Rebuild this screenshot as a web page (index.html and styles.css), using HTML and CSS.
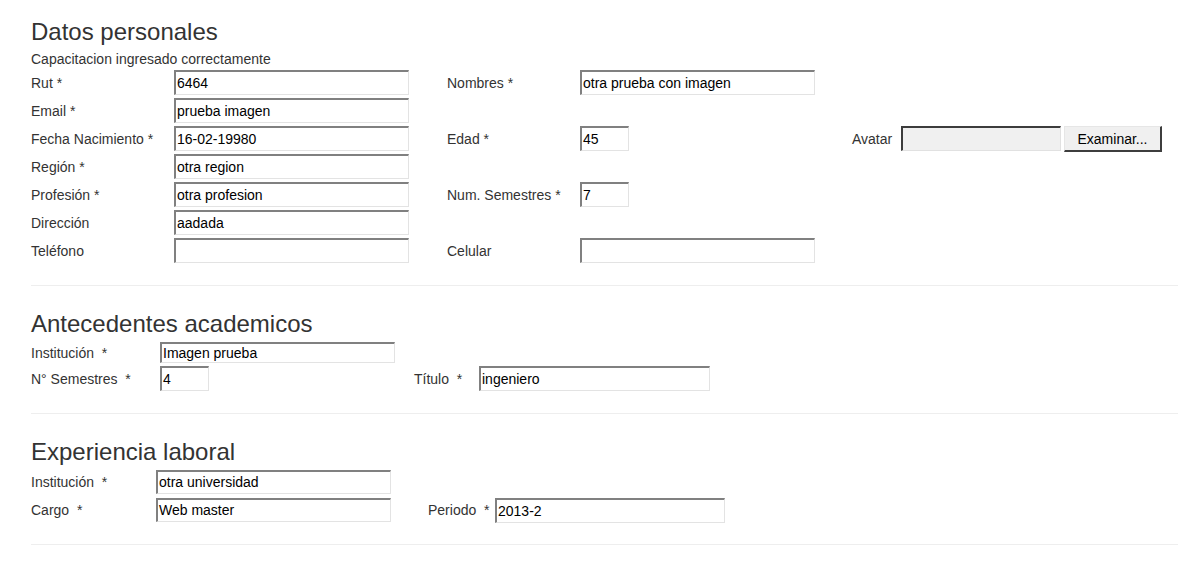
FILE: index.html
```html
<!DOCTYPE html>
<html lang="es">
<head>
<meta charset="utf-8">
<title>Datos personales</title>
<link rel="stylesheet" href="styles.css">
</head>
<body>
<div class="page">
  <section class="section">
    <h3 class="title">Datos personales</h3>
    <div class="message">Capacitacion ingresado correctamente</div>
    <div class="grid grid-personal">
      <label class="lbl r1 c1">Rut *</label>
      <div class="cell r1 c2"><span class="field w235">6464</span></div>
      <label class="lbl r1 c3">Nombres *</label>
      <div class="cell r1 c4"><span class="field w235">otra prueba con imagen</span></div>

      <label class="lbl r2 c1">Email *</label>
      <div class="cell r2 c2"><span class="field w235">prueba imagen</span></div>

      <label class="lbl r3 c1">Fecha Nacimiento *</label>
      <div class="cell r3 c2"><span class="field w235">16-02-19980</span></div>
      <label class="lbl r3 c3">Edad *</label>
      <div class="cell r3 c4"><span class="field w49">45</span></div>
      <label class="lbl r3 c5">Avatar</label>
      <div class="cell r3 c6 file">
        <span class="file-field"></span>
        <button class="file-btn" type="button">Examinar...</button>
      </div>

      <label class="lbl r4 c1">Región *</label>
      <div class="cell r4 c2"><span class="field w235">otra region</span></div>

      <label class="lbl r5 c1">Profesión *</label>
      <div class="cell r5 c2"><span class="field w235">otra profesion</span></div>
      <label class="lbl r5 c3">Num. Semestres *</label>
      <div class="cell r5 c4"><span class="field w49">7</span></div>

      <label class="lbl r6 c1">Dirección</label>
      <div class="cell r6 c2"><span class="field w235">aadada</span></div>

      <label class="lbl r7 c1">Teléfono</label>
      <div class="cell r7 c2"><span class="field w235"></span></div>
      <label class="lbl r7 c3">Celular</label>
      <div class="cell r7 c4"><span class="field w235"></span></div>
    </div>
  </section>
  <hr class="rule">

  <section class="section">
    <h3 class="title">Antecedentes academicos</h3>
    <div class="grid grid-academic">
      <label class="lbl r1 c1">Institución &nbsp;*</label>
      <div class="cell r1 c2"><span class="field w235 h21">Imagen prueba</span></div>

      <label class="lbl r2 c1">N° Semestres &nbsp;*</label>
      <div class="cell r2 c2"><span class="field w49">4</span></div>
      <label class="lbl r2 c3">Título &nbsp;*</label>
      <div class="cell r2 c4"><span class="field w231">ingeniero</span></div>
    </div>
  </section>
  <hr class="rule">

  <section class="section">
    <h3 class="title">Experiencia laboral</h3>
    <div class="grid grid-work">
      <label class="lbl r1 c1">Institución &nbsp;*</label>
      <div class="cell r1 c2"><span class="field w235 h24">otra universidad</span></div>

      <label class="lbl r2 c1">Cargo &nbsp;*</label>
      <div class="cell r2 c2"><span class="field w235 h24">Web master</span></div>
      <label class="lbl r2 c3">Periodo &nbsp;*</label>
      <div class="cell r2 c4"><span class="field w230">2013-2</span></div>
    </div>
  </section>
  <hr class="rule">
</div>
</body>
</html>
```

FILE: styles.css
```css
* { box-sizing: border-box; }

html, body {
  margin: 0;
  padding: 0;
  background: #ffffff;
}

body {
  font-family: "Liberation Sans", Arial, Helvetica, sans-serif;
  font-size: 14px;
  line-height: 20px;
  color: #333333;
}

.page {
  padding: 19px 0 0 31px;
}

.title {
  margin: 0 0 4px 0;
  font-size: 24px;
  line-height: 26px;
  font-weight: normal;
  color: #333333;
}

.message {
  height: 20px;
  line-height: 20px;
}

.rule {
  margin: 22px 0 25px 0;
  border: 0;
  border-top: 1px solid #eeeeee;
  height: 0;
}

.grid {
  display: grid;
  align-items: center;
}

.grid-personal {
  margin-top: 1px;
  grid-template-columns: 143px 273px 133px 272px 49px 1fr;
  grid-template-rows: repeat(7, 25px);
  row-gap: 3px;
}

.section + .rule + .section .title { margin-bottom: 5px; }

.grid-academic {
  grid-template-columns: 129px 254px 65px 1fr;
  grid-template-rows: 21px 25px;
  row-gap: 3px;
}

.grid-work {
  grid-template-columns: 125px 272px 67px 1fr;
  grid-template-rows: 24px 24px;
  row-gap: 4px;
}

.r1 { grid-row: 1; }
.r2 { grid-row: 2; }
.r3 { grid-row: 3; }
.r4 { grid-row: 4; }
.r5 { grid-row: 5; }
.r6 { grid-row: 6; }
.r7 { grid-row: 7; }
.c1 { grid-column: 1; }
.c2 { grid-column: 2; }
.c3 { grid-column: 3; }
.c4 { grid-column: 4; }
.c5 { grid-column: 5; }
.c6 { grid-column: 6; }

.lbl {
  white-space: nowrap;
  line-height: 20px;
}

.cell {
  display: flex;
  align-items: center;
  height: 100%;
}

.field {
  display: block;
  height: 25px;
  padding: 0 2px 0 1px;
  border-style: solid;
  border-width: 2px 1px 1px 2px;
  border-color: #808080 #e3e3e3 #e3e3e3 #808080;
  background: #ffffff;
  color: #000000;
  font-size: 14px;
  line-height: 22px;
  white-space: nowrap;
  overflow: hidden;
}

.w235 { width: 235px; }
.w231 { width: 231px; }
.w230 { width: 230px; }
.w49 { width: 49px; }
.field.h21 { height: 21px; line-height: 18px; }
.field.h24 { height: 24px; line-height: 21px; }

.file {
  gap: 3px;
  align-items: flex-start;
}

.file-field {
  display: block;
  width: 160px;
  height: 25px;
  background: #f0f0f0;
  border-style: solid;
  border-width: 2px 1px 1px 2px;
  border-color: #3c3c3c #e1e1e1 #e1e1e1 #3c3c3c;
}

.file-btn {
  width: 98px;
  height: 26px;
  margin: 0;
  padding: 0;
  background: #f0f0f0;
  border-style: solid;
  border-width: 1px 2px 2px 1px;
  border-color: #e6e6e6 #3e3e3e #3e3e3e #e6e6e6;
  font-family: "Liberation Sans", Arial, Helvetica, sans-serif;
  font-size: 14px;
  line-height: 20px;
  color: #000000;
  text-align: center;
}
```
